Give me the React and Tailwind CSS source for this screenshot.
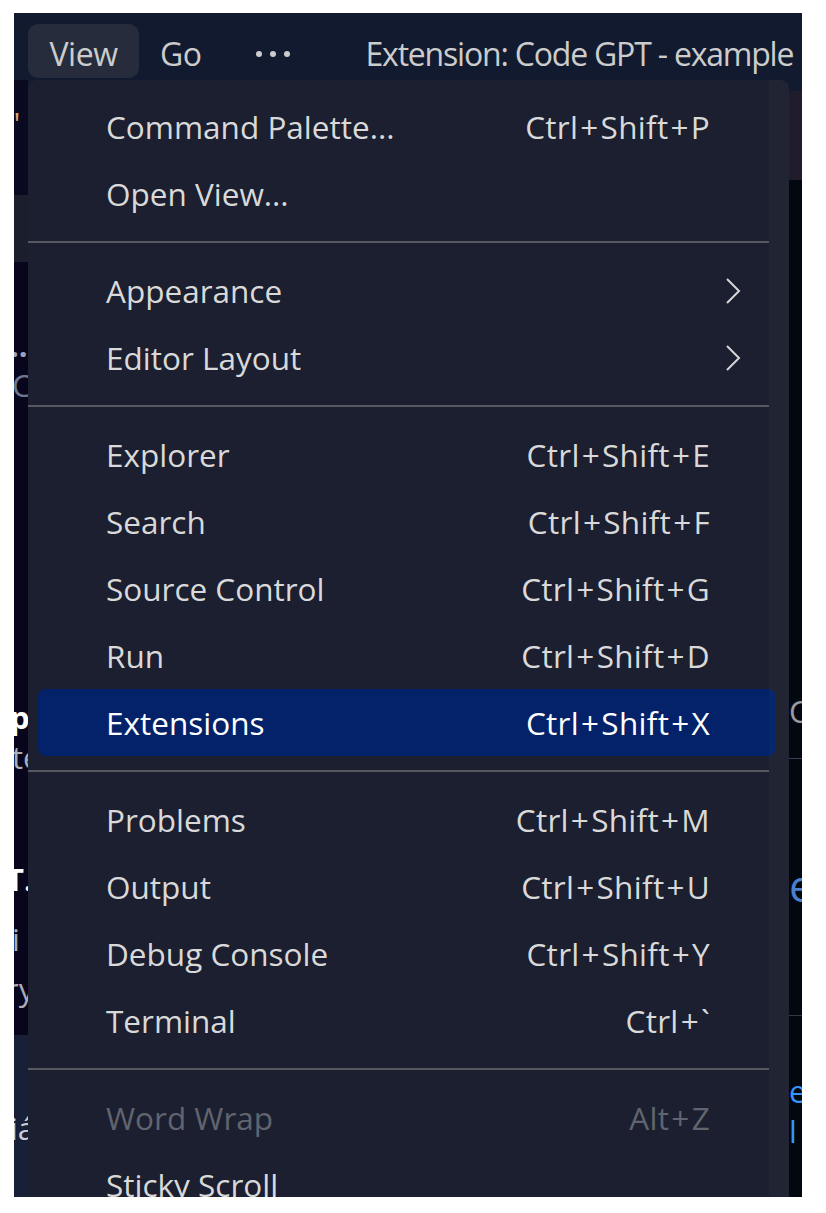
import React from 'react';

const sans = { fontFamily: '"Open Sans", "Noto Sans", sans-serif' };

const groups = [
  [
    { label: 'Command Palette...', keys: 'Ctrl+Shift+P' },
    { label: 'Open View...' },
  ],
  [
    { label: 'Appearance', sub: true },
    { label: 'Editor Layout', sub: true },
  ],
  [
    { label: 'Explorer', keys: 'Ctrl+Shift+E' },
    { label: 'Search', keys: 'Ctrl+Shift+F' },
    { label: 'Source Control', keys: 'Ctrl+Shift+G' },
    { label: 'Run', keys: 'Ctrl+Shift+D' },
    { label: 'Extensions', keys: 'Ctrl+Shift+X', active: true },
  ],
  [
    { label: 'Problems', keys: 'Ctrl+Shift+M' },
    { label: 'Output', keys: 'Ctrl+Shift+U' },
    { label: 'Debug Console', keys: 'Ctrl+Shift+Y' },
    { label: 'Terminal', keys: 'Ctrl+`' },
  ],
  [
    { label: 'Word Wrap', keys: 'Alt+Z', disabled: true },
    { label: 'Sticky Scroll' },
  ],
];

const Chevron = () => (
  <svg width="16" height="26" viewBox="0 0 16 26" fill="none">
    <polyline points="2,1 14,13 2,25" stroke="#d6d6d6" strokeWidth="2" strokeLinejoin="miter" />
  </svg>
);

// shortcut text; the plus signs get a little extra room
const Keys = ({ text }) => {
  const parts = text.split('+');
  return (
    <span className="text-[31.5px] leading-none tracking-[0.3px] whitespace-nowrap">
      {parts.map((p, i) => (
        <React.Fragment key={i}>
          {i > 0 && <span className="mx-[2px]">+</span>}
          {p}
        </React.Fragment>
      ))}
    </span>
  );
};

const MenuItem = ({ item }) => {
  const color = item.disabled ? 'text-[#60646f]' : item.active ? 'text-white' : 'text-[#d9d9d9]';
  return (
    <div
      className={`h-[67px] flex items-center justify-between pl-[68px] pr-[66px] rounded-[8px] ${
        item.active ? 'bg-[#03226a]' : ''
      } ${color}`}
    >
      <span className="text-[31.5px] leading-none whitespace-nowrap">{item.label}</span>
      {item.keys && <Keys text={item.keys} />}
      {item.sub && (
        <span className="-mr-[31px]">
          <Chevron />
        </span>
      )}
    </div>
  );
};

const Separator = () => (
  <div className="h-[30px] flex items-center -ml-[10px] mr-[7px]">
    <div className="h-[2px] w-full bg-[#56595f]" />
  </div>
);

// bits of the window that peek out on both sides of the menu
const LeftEdge = () => (
  <div className="w-[14px] shrink-0 flex flex-col overflow-hidden text-[31px] leading-none" style={sans}>
    <div className="h-[115px] bg-[#0a0922] pt-[28px] text-[#e0a36a] -ml-[6px]">"</div>
    <div className="h-[67px] bg-[#1b1f2d]" />
    <div className="h-[773px] bg-[#07061c] flex flex-col">
      <div className="h-[68px] shrink-0" />
      <div className="text-[#9aa3c0] -ml-[4px] font-bold">..</div>
      <div className="text-[#6e7690] -ml-[2px] mt-[9px]">C</div>
      <div className="h-[301px] shrink-0" />
      <div className="text-white font-bold -ml-[4px]">p</div>
      <div className="text-[#a9adb8] -ml-[2px] mt-[9px]">te</div>
      <div className="h-[91px] shrink-0" />
      <div className="text-white font-bold -ml-[8px]">T.</div>
      <div className="text-[#a9adb8] -ml-[2px] mt-[29px]">i</div>
      <div className="text-[#a9adb8] -ml-[8px] mt-[19px]">ry</div>
    </div>
    <div className="flex-1 bg-[#172036] pt-[78px] text-[#c8ccd6] -ml-[4px]">iá</div>
  </div>
);

const RightEdge = () => (
  <div className="w-[13px] shrink-0 flex flex-col overflow-hidden text-[31px] leading-none" style={sans}>
    <div className="h-[11px] bg-[#111a2e]" />
    <div className="h-[89px] bg-[#201c2b]" />
    <div className="flex-1 bg-[#010810] flex flex-col">
      <div className="h-[516px] shrink-0" />
      <div className="text-[#9a9aa2]">C</div>
      <div className="h-[31px] shrink-0" />
      <div className="h-[1px] bg-[#3f3a55]" />
      <div className="h-[104px] shrink-0" />
      <div className="text-[#4d7fd0] text-[44px]">e</div>
      <div className="h-[108px] shrink-0" />
      <div className="h-[1px] bg-[#33363e]" />
      <div className="h-[60px] shrink-0" />
      <div className="text-[#3794ff]">er</div>
      <div className="text-[#3794ff] mt-[9px]">l</div>
    </div>
  </div>
);

export default function App() {
  return (
    <div className="w-[826px] h-[1213px] bg-white pt-[13px] pl-[14px]" style={sans}>
      <div className="w-[788px] h-[1184px] overflow-hidden flex flex-col bg-[#111a2e]">
        {/* title bar */}
        <div className="h-[67px] shrink-0 flex items-start pt-[11px] text-[#cccccc] text-[32px] leading-none">
          <div className="ml-[14px] w-[111px] h-[54px] pt-[5px] rounded-[10px] bg-[#262c3b] flex items-center justify-center tracking-[-0.5px]">
            View
          </div>
          <div className="ml-[21px] h-[54px] pt-[5px] flex items-center tracking-[-0.5px]">Go</div>
          <div className="ml-[54px] h-[54px] pt-[5px] flex gap-[8px] items-center">
            <span className="w-[6px] h-[6px] rounded-full bg-[#cccccc]" />
            <span className="w-[6px] h-[6px] rounded-full bg-[#cccccc]" />
            <span className="w-[6px] h-[6px] rounded-full bg-[#cccccc]" />
          </div>
          <div className="ml-[76px] h-[54px] pt-[5px] flex items-center tracking-[-1.2px] whitespace-nowrap">
            Extension: Code GPT - example
          </div>
        </div>

        <div className="flex-1 flex min-h-0">
          <LeftEdge />
          {/* the open View menu */}
          <div className="relative w-[761px] shrink-0 bg-[#1b1f2f] rounded-t-[8px] overflow-hidden">
            <div className="pt-[13px] pl-[10px] pr-[13px]">
              {groups.map((g, gi) => (
                <div key={gi}>
                  {gi > 0 && <Separator />}
                  {g.map((item) => (
                    <MenuItem key={item.label} item={item} />
                  ))}
                </div>
              ))}
            </div>
            <div className="absolute right-0 top-0 bottom-0 w-[20px] bg-[#ffffff]/[0.025]" />
          </div>
          <RightEdge />
        </div>
      </div>
    </div>
  );
}
